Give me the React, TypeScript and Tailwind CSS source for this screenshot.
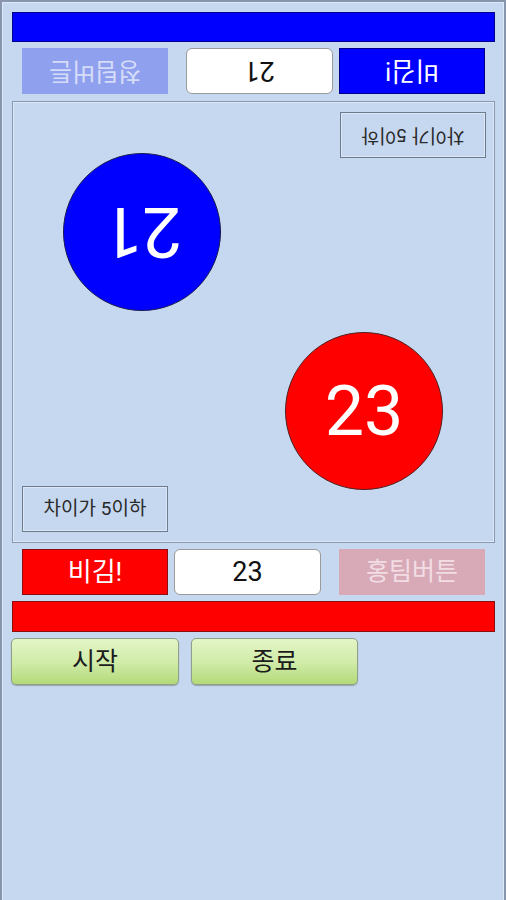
import React from "react";

const font = { fontFamily: '"Roboto", "Noto Sans CJK KR", "Noto Sans", sans-serif' };

function ScoreRow({
  drawBg,
  drawText,
  value,
  teamBg,
  teamText,
  teamLabel,
}: {
  drawBg: string;
  drawText: string;
  value: string;
  teamBg: string;
  teamText: string;
  teamLabel: string;
}) {
  return (
    <div className="flex h-[46px] pl-[10px]">
      <div
        className={`w-[146px] h-[46px] flex items-center justify-center text-[26px] text-white border border-[#8a1010] ${drawBg}`}
      >
        {drawText}
      </div>
      <div className="ml-[6px] w-[147px] h-[46px] flex items-center justify-center bg-white border border-[#9a9a9a] rounded-[6px] text-[27px] text-[#111]">
        {value}
      </div>
      <div
        className={`ml-[18px] w-[146px] h-[46px] flex items-center justify-center text-[25px] ${teamBg} ${teamText}`}
      >
        {teamLabel}
      </div>
    </div>
  );
}

function GreenButton({ label, className }: { label: string; className?: string }) {
  return (
    <div
      className={`h-[47px] flex items-center justify-center rounded-[5px] border border-[#8f9f88] bg-gradient-to-b from-[#e2f5c6] via-[#d2ecaa] to-[#b3da78] text-[25px] text-[#1c1c1c] shadow-[0_1px_1px_rgba(80,90,70,0.4)] ${className ?? ""}`}
    >
      {label}
    </div>
  );
}

export default function App() {
  return (
    <div className="w-[506px] h-[900px] bg-[#c6d8ef] overflow-hidden" style={font}>
      <div className="w-full h-full border-l-2 border-t-2 border-r-2 border-[#8896ad]">
        <div className="w-full h-full border-l border-t border-r border-[#dde8f6] pl-[9px] pr-[8px] pt-[9px] flex flex-col">
          {/* blue bar */}
          <div className="h-[30px] bg-[#0000ff] border border-[#00008a]" />

          {/* top row (rotated 180deg) */}
          <div className="mt-[6px] rotate-180">
            <div className="flex h-[46px] pl-[10px]">
              <div className="w-[146px] h-[46px] flex items-center justify-center text-[26px] text-white bg-[#0000ff] border border-[#00008a]">
                비김!
              </div>
              <div className="ml-[6px] w-[147px] h-[46px] flex items-center justify-center bg-white border border-[#9a9a9a] rounded-[6px] text-[27px] text-[#111]">
                21
              </div>
              <div className="ml-[18px] w-[146px] h-[46px] flex items-center justify-center text-[25px] bg-[#8fa0ee] text-[#d4dcf8]">
                청팀버튼
              </div>
            </div>
          </div>

          {/* game panel */}
          <div className="mt-[7px] h-[442px] relative border border-[#8a99b0] shadow-[inset_0_0_0_1px_#dde8f6]">
            <div className="absolute left-[327px] top-[10px] w-[146px] h-[46px] rotate-180 flex items-center justify-center border border-[#6d7b8e] shadow-[inset_0_0_0_1px_#dce7f5] text-[19px] text-[#2a2a2a]">
              차이가 5이하
            </div>
            <div className="absolute left-[50px] top-[51px] w-[158px] h-[158px] rounded-full bg-[#0000ff] border border-[#1a1a50] flex items-center justify-center">
              <span className="rotate-180 text-[70px] leading-none text-white">21</span>
            </div>
            <div className="absolute left-[272px] top-[230px] w-[158px] h-[158px] rounded-full bg-[#ff0000] border border-[#502020] flex items-center justify-center">
              <span className="text-[70px] leading-none text-white">23</span>
            </div>
            <div className="absolute left-[9px] top-[384px] w-[146px] h-[46px] flex items-center justify-center border border-[#6d7b8e] shadow-[inset_0_0_0_1px_#dce7f5] text-[19px] text-[#2a2a2a]">
              차이가 5이하
            </div>
          </div>

          {/* bottom row */}
          <div className="mt-[6px]">
            <ScoreRow
              drawBg="bg-[#ff0000]"
              drawText="비김!"
              value="23"
              teamBg="bg-[#d8aab8]"
              teamText="text-[#f2dde4]"
              teamLabel="홍팀버튼"
            />
          </div>

          {/* red bar */}
          <div className="mt-[6px] h-[31px] bg-[#ff0000] border border-[#8a1010]" />

          {/* buttons */}
          <div className="mt-[6px] flex ml-[-1px] gap-[12px]">
            <GreenButton label="시작" className="w-[168px]" />
            <GreenButton label="종료" className="w-[167px]" />
          </div>
        </div>
      </div>
    </div>
  );
}
